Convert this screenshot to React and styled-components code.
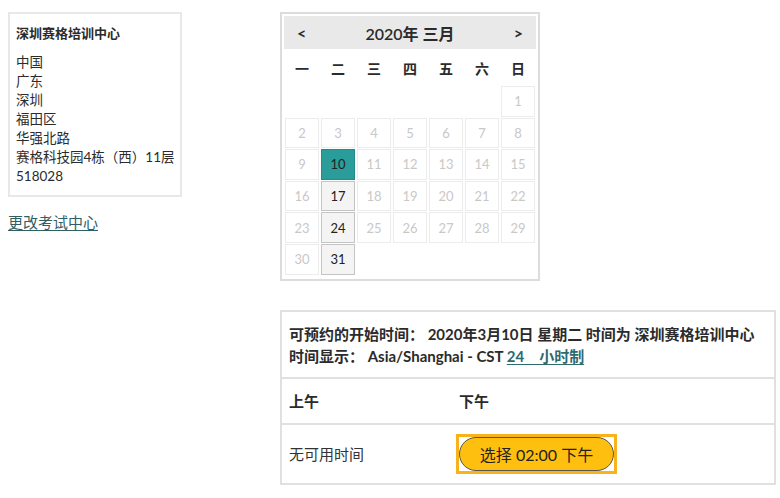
import React from "react";
import styled, { createGlobalStyle } from "styled-components";

const GlobalStyle = createGlobalStyle`
  body {
    margin: 8px 0 8px 8px;
    background: #fff;
    font-family: "Lato", "Noto Sans CJK SC", sans-serif;
    color: #2b2b2b;
  }
`;

const Page = styled.div`
  display: flex;
  align-items: flex-start;
  padding-top: 4px;
`;

const LeftCol = styled.div`
  flex-shrink: 0;
  width: 174px;
  margin-right: 98px;
`;

const AddressBox = styled.div`
  border: 2px solid #e8e8e8;
  padding: 10px 6px 9px 6px;
  font-size: 13.5px;
  line-height: 19px;
  white-space: nowrap;
`;

const CenterName = styled.div`
  font-weight: 700;
  font-size: 13px;
  margin-bottom: 10px;
`;

const ChangeLink = styled.a`
  display: inline-block;
  margin-top: 14px;
  font-size: 15px;
  color: #2f5f63;
  text-decoration: underline;
  text-underline-offset: 2px;
  cursor: pointer;
`;

const RightCol = styled.div`
  flex-shrink: 0;
  display: flex;
  flex-direction: column;
  gap: 29px;
`;

const Calendar = styled.div`
  width: 252px;
  border: 2px solid #dcdcdc;
  padding: 2px 2px 1px 2px;
`;

const CalHeader = styled.div`
  display: flex;
  align-items: center;
  justify-content: space-between;
  height: 33px;
  background: #e9e9e9;
  padding: 0 13px;
  font-size: 16px;
  font-weight: 600;
`;

const NavBtn = styled.span`
  font-size: 16px;
  font-weight: 700;
  cursor: pointer;
`;

const Grid = styled.div`
  display: grid;
  grid-template-columns: repeat(7, 1fr);
  grid-template-rows: 37px;
  grid-auto-rows: 31.6px;
  column-gap: 2px;
  padding: 0 1px 2px 1px;
`;

const WeekDay = styled.div`
  display: flex;
  align-items: center;
  justify-content: center;
  font-size: 14px;
  font-weight: 700;
`;

const Day = styled.div`
  display: flex;
  align-items: center;
  justify-content: center;
  margin: 0 0 1px 0;
  font-size: 13px;
  border: 1px solid ${({ $kind }) =>
    $kind === "selected" ? "#218c8a" : $kind === "open" ? "#c4c4c4" : "#ececec"};
  background: ${({ $kind }) =>
    $kind === "selected" ? "#2a9c9a" : $kind === "open" ? "#f4f4f4" : "#fff"};
  color: ${({ $kind }) => ($kind === "disabled" ? "#c8c8c8" : "#222")};
  ${({ $kind }) => ($kind === "empty" ? "border: none;" : "")}
`;

const Times = styled.div`
  box-sizing: border-box;
  width: 496px;
  border: 2px solid #e0e0e0;
`;

const TimesInfo = styled.div`
  padding: 11px 7px 10px 7px;
  font-size: 15px;
  font-weight: 700;
  line-height: 22px;
  white-space: nowrap;
  border-bottom: 2px solid #e0e0e0;
`;

const InfoLink = styled.a`
  color: #2f6a6e;
  text-decoration: underline;
  text-underline-offset: 2px;
`;

const SlotRow = styled.div`
  display: grid;
  grid-template-columns: 170px 1fr;
  align-items: center;
  padding: 0 7px;
  height: ${({ $h }) => $h}px;
  border-bottom: ${({ $last }) => ($last ? "none" : "2px solid #e0e0e0")};
`;

const SlotHead = styled.div`
  font-size: 15px;
  font-weight: 700;
`;

const NoSlots = styled.div`
  font-size: 15px;
  color: #333;
`;

const FocusRing = styled.span`
  justify-self: start;
  display: inline-flex;
  margin-left: -3px;
  border: 3px solid #f7b21c;
  background: #fff;
`;

const SlotButton = styled.button`
  height: 34px;
  width: 155px;
  border-radius: 17px;
  border: 1px solid #555;
  background: #ffbf0f;
  font-family: "Lato", "Noto Sans CJK SC", sans-serif;
  font-size: 16px;
  color: #222;
  padding: 0;
  cursor: pointer;
`;

const weekdays = ["一", "二", "三", "四", "五", "六", "日"];

function buildDays() {
  const cells = [];
  for (let i = 0; i < 6; i++) cells.push({ key: "e" + i, label: "", kind: "empty" });
  for (let d = 1; d <= 31; d++) {
    let kind = "disabled";
    if (d === 10) kind = "selected";
    if (d === 17 || d === 24 || d === 31) kind = "open";
    cells.push({ key: d, label: d, kind });
  }
  return cells;
}

export default function App() {
  const days = buildDays();
  return (
    <>
      <GlobalStyle />
      <Page>
        <LeftCol>
          <AddressBox>
            <CenterName>深圳赛格培训中心</CenterName>
            <div>中国</div>
            <div>广东</div>
            <div>深圳</div>
            <div>福田区</div>
            <div>华强北路</div>
            <div>赛格科技园4栋（西）11层</div>
            <div>518028</div>
          </AddressBox>
          <ChangeLink>更改考试中心</ChangeLink>
        </LeftCol>
        <RightCol>
          <Calendar>
            <CalHeader>
              <NavBtn>&lt;</NavBtn>
              <span>2020年 三月</span>
              <NavBtn>&gt;</NavBtn>
            </CalHeader>
            <Grid>
              {weekdays.map((w) => (
                <WeekDay key={w}>{w}</WeekDay>
              ))}
              {days.map((c) => (
                <Day key={c.key} $kind={c.kind}>
                  {c.label}
                </Day>
              ))}
            </Grid>
          </Calendar>
          <Times>
            <TimesInfo>
              可预约的开始时间： 2020年3月10日 星期二 时间为 深圳赛格培训中心
              <br />
              时间显示： Asia/Shanghai - CST <InfoLink>24　小时制</InfoLink>
            </TimesInfo>
            <SlotRow $h={44}>
              <SlotHead>上午</SlotHead>
              <SlotHead>下午</SlotHead>
            </SlotRow>
            <SlotRow $h={58} $last>
              <NoSlots>无可用时间</NoSlots>
              <FocusRing>
                <SlotButton>选择 02:00 下午</SlotButton>
              </FocusRing>
            </SlotRow>
          </Times>
        </RightCol>
      </Page>
    </>
  );
}
